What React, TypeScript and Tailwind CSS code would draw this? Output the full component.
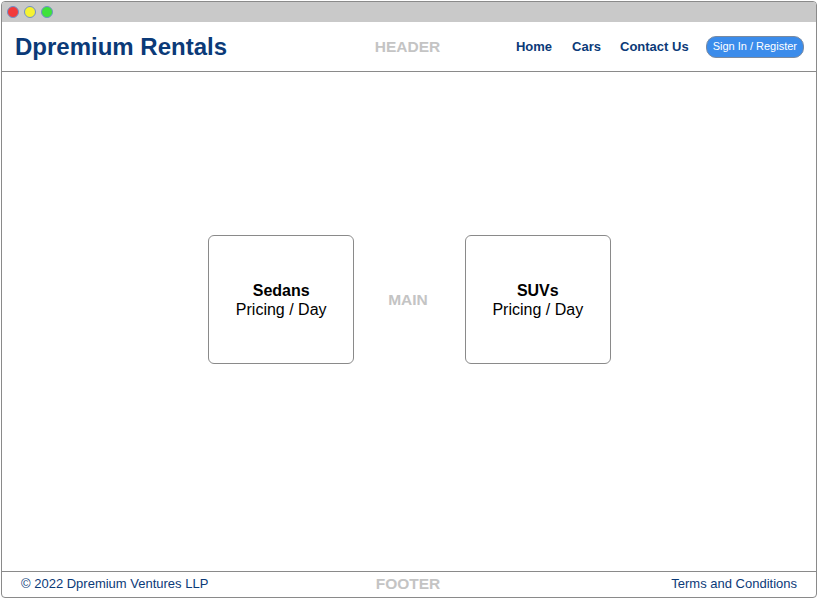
export default function App() {
  const cards = [
    { title: 'Sedans', sub: 'Pricing / Day' },
    { title: 'SUVs', sub: 'Pricing / Day' },
  ];

  return (
    <div className="w-[818px] h-[598px] bg-white pt-px px-px font-['Liberation_Sans',Arial,sans-serif]">
      <div className="h-full flex flex-col border border-[#8a8a8a] rounded-[4px] overflow-hidden">
        {/* Title bar */}
        <div className="h-[20px] shrink-0 bg-[#c9c9c9] flex items-center gap-[5px] pl-[5px]">
          <span className="w-[12px] h-[12px] rounded-full bg-[#f23a3a] border border-[#6f8fc8]" />
          <span className="w-[12px] h-[12px] rounded-full bg-[#f5f232] border border-[#6f8fc8]" />
          <span className="w-[12px] h-[12px] rounded-full bg-[#3ee23a] border border-[#6f8fc8]" />
        </div>

        {/* Header */}
        <header className="h-[50px] shrink-0 border-b border-[#8a8a8a] grid grid-cols-[1fr_auto_1fr] items-center pl-[13px] pr-[12px]">
          <h1 className="text-[24px] font-bold text-[#0b3a78] leading-none">Dpremium Rentals</h1>
          <span className="mr-[4px] text-[15.5px] font-bold text-[#c4c4c4] leading-none">HEADER</span>
          <nav className="flex items-center justify-end">
            <a className="text-[13px] font-bold text-[#0b3a78]">Home</a>
            <a className="ml-[20px] text-[13px] font-bold text-[#0b3a78]">Cars</a>
            <a className="ml-[19px] text-[13px] font-bold text-[#0b3a78]">Contact Us</a>
            <button className="ml-[17px] h-[22px] px-[6px] rounded-[10px] bg-[#3b8ceb] border border-[#7a8aa0] text-white text-[11px] leading-none">
              Sign In / Register
            </button>
          </nav>
        </header>

        {/* Main */}
        <main className="flex-1 flex items-center justify-center pl-[1px] pb-[44px]">
          <Card {...cards[0]} />
          <span className="ml-[34px] mr-[37px] text-[15.5px] font-bold text-[#c4c4c4]">MAIN</span>
          <Card {...cards[1]} />
        </main>

        {/* Footer */}
        <footer className="h-[26px] shrink-0 border-t border-[#8a8a8a] grid grid-cols-[1fr_auto_1fr] items-center px-[19px] pb-[2px]">
          <span className="text-[13px] text-[#0b3a78]">© 2022 Dpremium Ventures LLP</span>
          <span className="mr-[2px] text-[15.5px] font-bold text-[#c4c4c4]">FOOTER</span>
          <span className="text-[13px] text-[#0b3a78] text-right">Terms and Conditions</span>
        </footer>
      </div>
    </div>
  );
}

function Card({ title, sub }: { title: string; sub: string }) {
  return (
    <div className="w-[146px] h-[129px] pt-px border border-[#8a8a8a] rounded-[6px] flex flex-col items-center justify-center text-[16px] text-black leading-[19px]">
      <span className="font-bold">{title}</span>
      <span>{sub}</span>
    </div>
  );
}
